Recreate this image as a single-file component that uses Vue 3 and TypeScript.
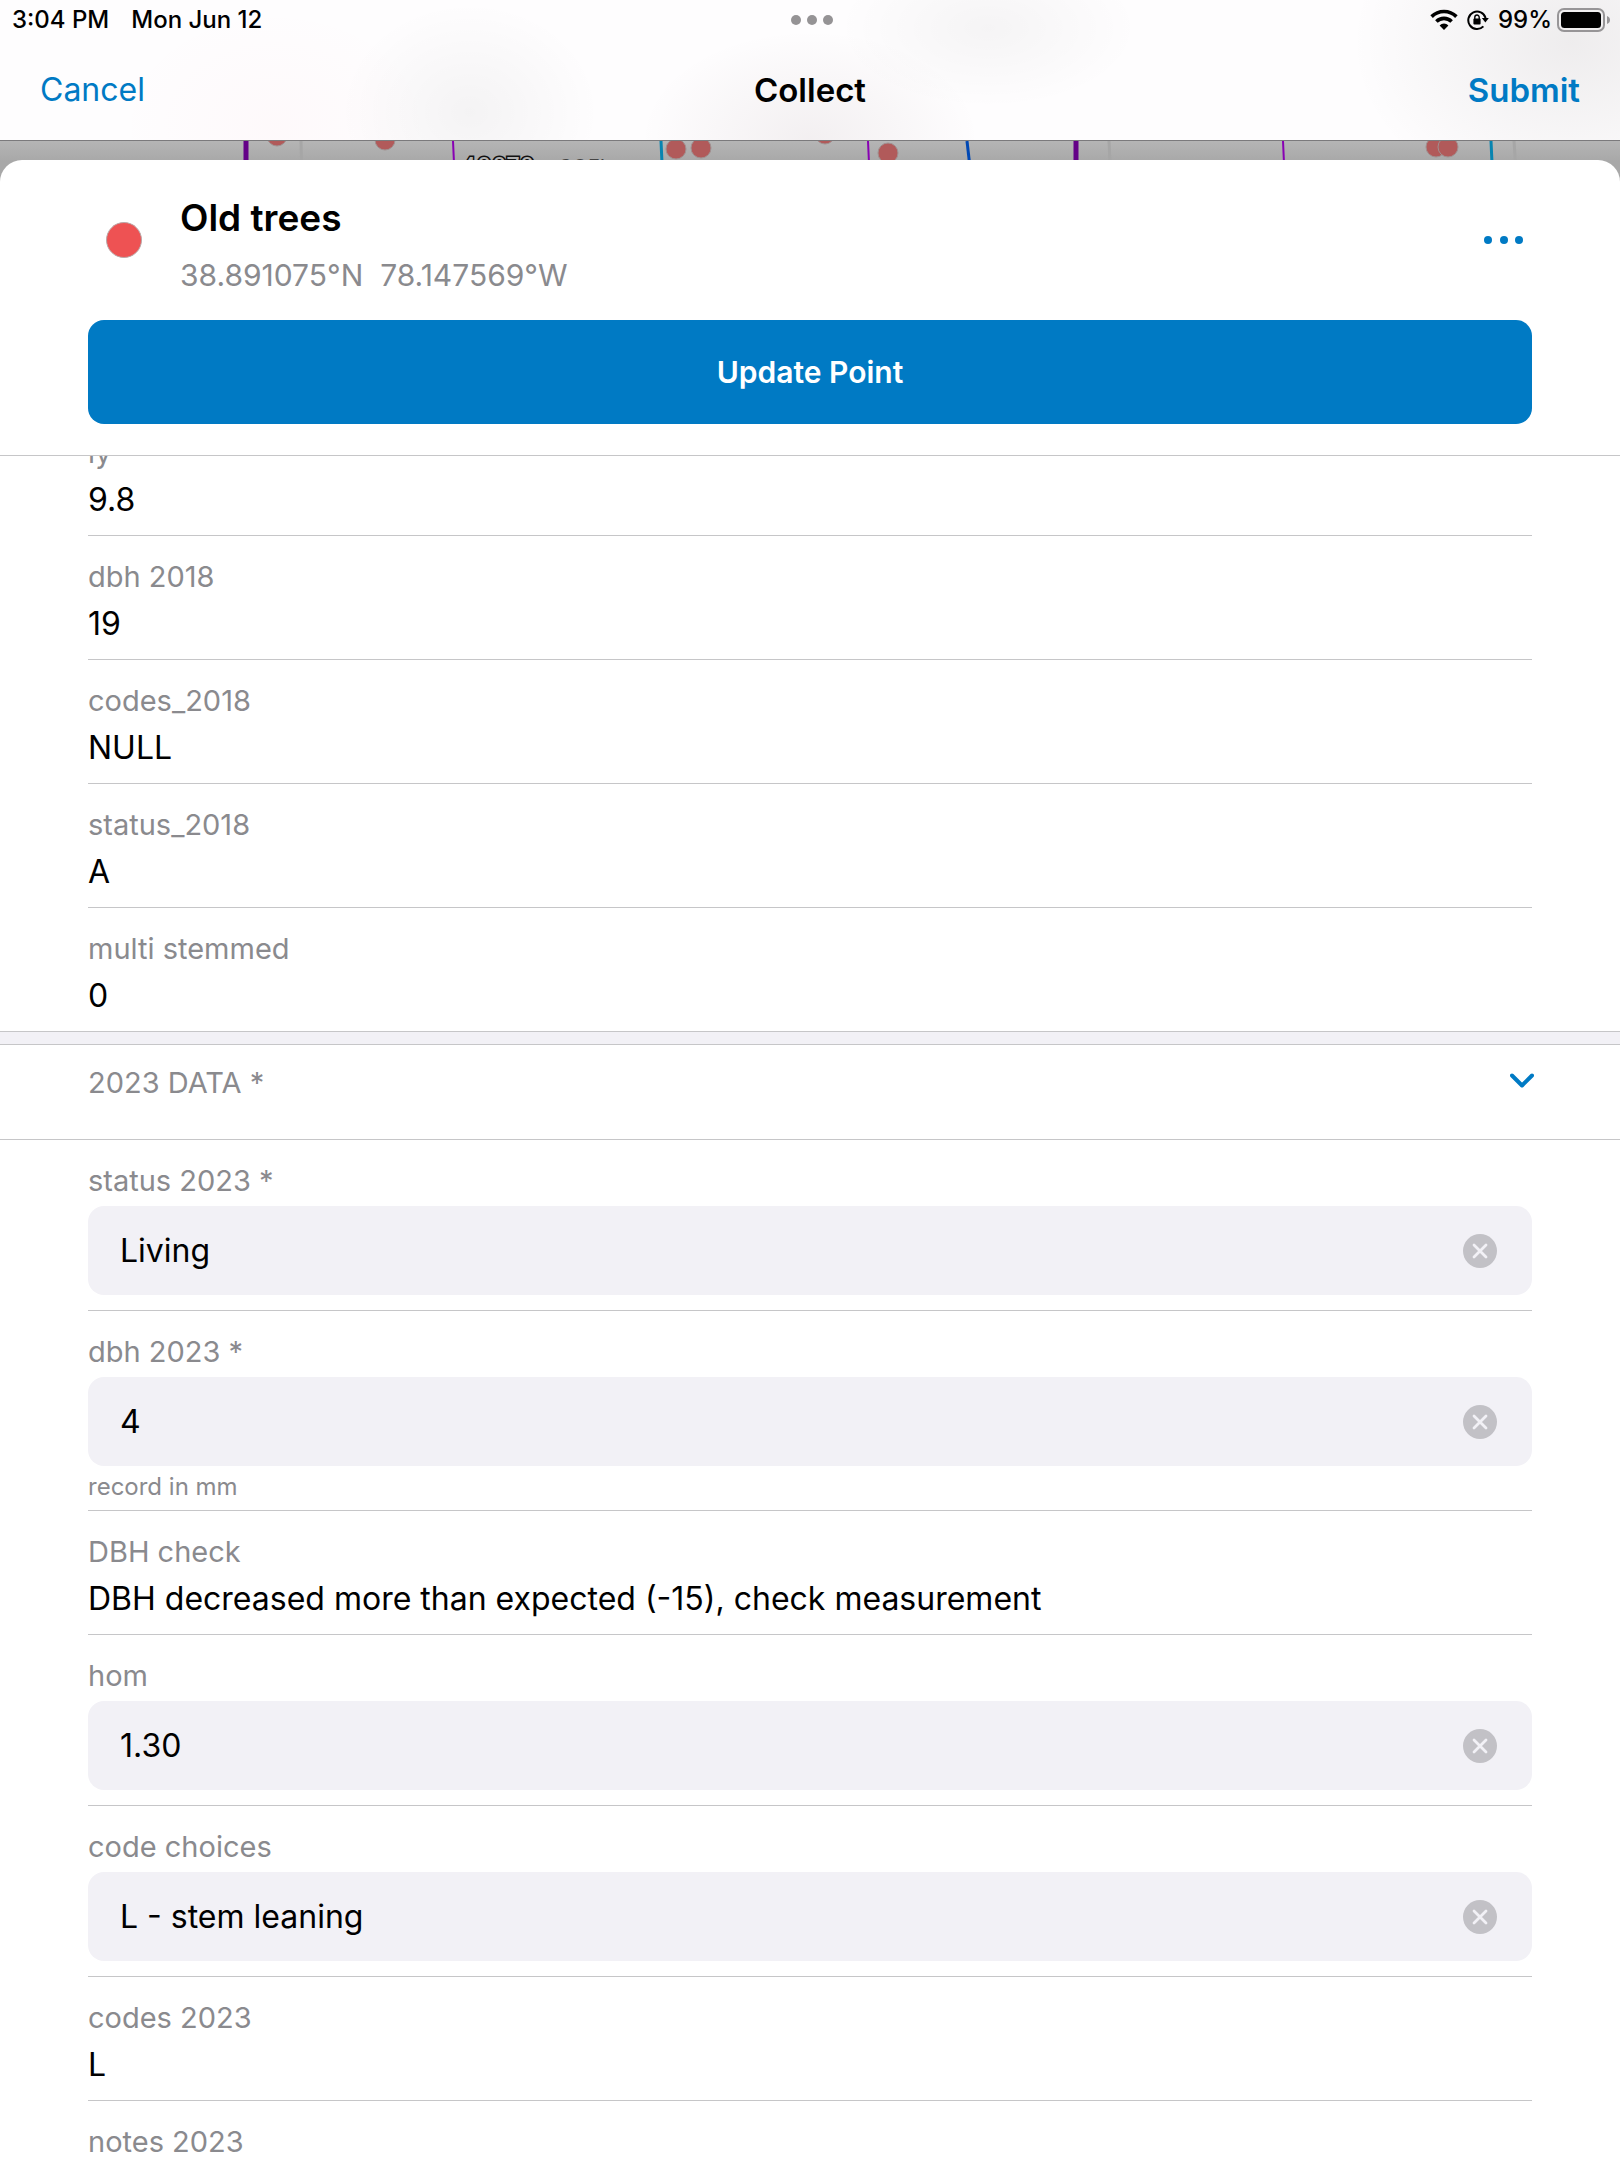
<script setup lang="ts">
import { onMounted, ref } from 'vue'

interface Field {
  id: string
  label: string
  value: string
  editable?: boolean
  hint?: string
}

const previousFields: Field[] = [
  { id: 'ly', label: 'ly', value: '9.8' },
  { id: 'dbh-2018', label: 'dbh 2018', value: '19' },
  { id: 'codes-2018', label: 'codes_2018', value: 'NULL' },
  { id: 'status-2018', label: 'status_2018', value: 'A' },
  { id: 'multi-stemmed', label: 'multi stemmed', value: '0' },
]

const currentFields = ref<Field[]>([
  { id: 'status-2023', label: 'status 2023 *', value: 'Living', editable: true },
  { id: 'dbh-2023', label: 'dbh 2023 *', value: '4', editable: true, hint: 'record in mm' },
  { id: 'dbh-check', label: 'DBH check', value: 'DBH decreased more than expected (-15), check measurement' },
  { id: 'hom', label: 'hom', value: '1.30', editable: true },
  { id: 'code-choices', label: 'code choices', value: 'L - stem leaning', editable: true },
  { id: 'codes-2023', label: 'codes 2023', value: 'L' },
  { id: 'notes-2023', label: 'notes 2023', value: '', editable: true },
])

const expanded = ref(true)
const form = ref<HTMLElement | null>(null)

onMounted(() => {
  if (form.value) form.value.scrollTop = 44
})
</script>

<template>
  <div class="screen">
    <header class="top">
      <div class="status">
        <div class="status-left">
          <span>3:04 PM</span>
          <span>Mon Jun 12</span>
        </div>
        <svg class="multitask" width="44" height="12" viewBox="0 0 44 12" aria-hidden="true">
          <circle cx="6" cy="6" r="5" />
          <circle cx="22" cy="6" r="5" />
          <circle cx="38" cy="6" r="5" />
        </svg>
        <div class="status-right">
          <svg width="28" height="22" viewBox="0 0 28 22" aria-hidden="true">
            <g fill="none" stroke="#000" stroke-width="3.6">
              <path d="M1.6 7.6a17.6 17.6 0 0 1 24.8 0" />
              <path d="M6.4 12.5a10.8 10.8 0 0 1 15.2 0" />
            </g>
            <path d="M14 21l-4.4-4.6a6.3 6.3 0 0 1 8.8 0z" />
          </svg>
          <svg class="lock" width="22" height="22" viewBox="0 0 22 22" aria-hidden="true">
            <path d="M16.4 17.4A8.8 8.8 0 1 1 18.6 9" fill="none" stroke="#000" stroke-width="2" />
            <path d="M14.8 9h7l-3.4 4.6z" />
            <rect x="6.4" y="9.6" width="7.2" height="6" rx="1" />
            <path d="M7.8 10V8.2a2.2 2.2 0 0 1 4.4 0V10" fill="none" stroke="#000" stroke-width="1.4" />
          </svg>
          <span>99%</span>
          <svg width="54" height="24" viewBox="0 0 54 24" aria-hidden="true">
            <rect x="1" y="1" width="46" height="22" rx="6" fill="none" stroke="#979597" stroke-width="2" />
            <rect x="4" y="4" width="40" height="16" rx="3.5" />
            <path d="M50 8c2 .7 3 2.200 3 4s-1 3.300-3 4z" fill="#979597" />
          </svg>
        </div>
      </div>
      <nav class="nav">
        <button type="button" class="nav-button">Cancel</button>
        <h1>Collect</h1>
        <button type="button" class="nav-button strong">Submit</button>
      </nav>
    </header>

    <svg class="map" viewBox="0 0 1620 44" preserveAspectRatio="xMidYMin slice" aria-hidden="true">
      <g stroke="#a6a6a6" stroke-width="3">
        <path d="M301 0l1 44M1109 0l2 44M1514 0l3 44" />
      </g>
      <g fill="#b15a5a" stroke="#a09090" stroke-width="1">
        <circle cx="277" cy="-5" r="10" />
        <circle cx="385" cy="-1" r="10" />
        <circle cx="676" cy="8" r="10" />
        <circle cx="701" cy="7" r="10" />
        <circle cx="825" cy="-7" r="10" />
        <circle cx="888" cy="12" r="10" />
        <circle cx="1436" cy="6" r="10" />
        <circle cx="1448" cy="6" r="10" />
      </g>
      <path d="M246 0v44M1076 0v44" stroke="#640087" stroke-width="5" />
      <path d="M453 0l2 44M868 0l2 44M1283 0l2 44" stroke="#8800b3" stroke-width="2" />
      <path d="M661 0l2 44M1491 0l2 44" stroke="#0784b0" stroke-width="3" />
      <path d="M967 0l5 44" stroke="#0048b4" stroke-width="3" />
      <text class="map-label" x="461" y="34">40070</text>
      <text class="map-faint" x="558" y="33">COFL</text>
    </svg>

    <main class="sheet">
      <section class="feature">
        <div class="feature-row">
          <span class="symbol"></span>
          <div class="feature-text">
            <h2>Old trees</h2>
            <p>38.891075°N&nbsp; 78.147569°W</p>
          </div>
          <button type="button" class="icon-button" aria-label="More">
            <svg width="40" height="8" viewBox="0 0 40 8">
              <circle cx="4" cy="4" r="4" />
              <circle cx="20" cy="4" r="4" />
              <circle cx="35" cy="4" r="4" />
            </svg>
          </button>
        </div>
        <button type="button" class="update">Update Point</button>
      </section>

      <form ref="form" class="form" @submit.prevent>
        <section class="group previous">
          <div v-for="field in previousFields" :key="field.id" class="field">
            <div class="label">{{ field.label }}</div>
            <div class="value">{{ field.value }}</div>
          </div>
        </section>

        <div class="divider"></div>

        <div class="group-head">
          <h3 class="label">2023 DATA *</h3>
          <button type="button" class="icon-button" aria-label="Toggle 2023 data" @click="expanded = !expanded">
            <svg width="24" height="16" viewBox="0 0 24 16">
              <path d="M2 2.500l10 10 10-10" fill="none" stroke="#007ac4" stroke-width="4" stroke-linecap="round" stroke-linejoin="round" />
            </svg>
          </button>
        </div>

        <section v-if="expanded" class="group">
          <div v-for="field in currentFields" :key="field.id" class="field" :class="{ hinted: field.hint }">
            <template v-if="field.editable">
              <label class="label" :for="field.id">{{ field.label }}</label>
              <div class="box">
                <input :id="field.id" v-model="field.value" type="text" autocomplete="off" />
                <button type="button" class="icon-button" aria-label="Clear" @click="field.value = ''">
                  <svg width="34" height="34" viewBox="0 0 34 34">
                    <circle cx="17" cy="17" r="17" fill="#c2c1c6" />
                    <path d="M11 11l12 12M23 11l-12 12" stroke="#f2f1f6" stroke-width="2.800" stroke-linecap="round" />
                  </svg>
                </button>
              </div>
              <p v-if="field.hint" class="hint">{{ field.hint }}</p>
            </template>
            <template v-else>
              <div class="label">{{ field.label }}</div>
              <div class="value">{{ field.value }}</div>
            </template>
          </div>
        </section>
      </form>
    </main>
  </div>
</template>

<style>
body {
  background: #fff;
}
</style>

<style scoped>
.screen {
  display: flex;
  flex-direction: column;
  height: 100vh;
  overflow: hidden;
  color: #000;
  font-family: Inter, "Liberation Sans", sans-serif;
}

h1,
h2,
h3,
p {
  margin: 0;
  font-weight: 400;
}

button {
  padding: 0;
  border: 0;
  background: none;
  color: #007ac4;
  font: inherit;
}

svg {
  display: block;
}

.top {
  flex: none;
  border-bottom: 1px solid #7b7a7c;
  background:
    radial-gradient(ellipse 130px 110px at 29% 80%, rgba(0, 0, 0, 0.04), transparent),
    radial-gradient(ellipse 170px 110px at 50% 100%, rgba(60, 20, 30, 0.06), transparent),
    radial-gradient(ellipse 150px 80px at 61% 20%, rgba(0, 0, 0, 0.035), transparent),
    radial-gradient(ellipse 220px 170px at 97% 30%, rgba(30, 20, 20, 0.07), transparent),
    radial-gradient(ellipse 160px 120px at 17% 90%, rgba(255, 60, 90, 0.02), transparent),
    #fefdfe;
}

.status {
  display: grid;
  grid-template-columns: 1fr auto 1fr;
  align-items: center;
  height: 40px;
  padding: 0 9px 0 12px;
  font-size: 24px;
  line-height: 32px;
  font-weight: 500;
}

.status-left,
.status-right {
  display: flex;
  align-items: center;
}

.status-left {
  gap: 22px;
}

.status-right {
  justify-content: flex-end;
  gap: 5px;
}

.lock {
  margin: 0 4px;
}

.multitask {
  fill: #959395;
}

.nav {
  display: grid;
  grid-template-columns: 1fr auto 1fr;
  align-items: center;
  height: 100px;
  padding: 0 40px;
  font-size: 32px;
  line-height: 44px;
}

.nav-button {
  justify-self: start;
}

.nav-button.strong {
  justify-self: end;
}

.nav h1,
.strong {
  font-size: 33px;
  font-weight: 600;
}

.map {
  flex: none;
  width: 100%;
  height: 44px;
  background: linear-gradient(#b5b5b5, #a8a8a8 20px);
}

.map-label {
  fill: #b0b0b0;
  stroke: #111;
  stroke-width: 3px;
  paint-order: stroke;
  font-size: 24px;
}

.map-faint {
  fill: #444;
  font-size: 20px;
}

.sheet {
  display: flex;
  flex: 1;
  flex-direction: column;
  min-height: 0;
  margin-top: -25px;
  border-radius: 22px 22px 0 0;
  background: #fff;
  z-index: 1;
}

.feature {
  flex: none;
  padding: 32px 88px 31px;
  border-bottom: 1px solid #c6c6c8;
}

.feature-row {
  display: flex;
  align-items: center;
  height: 96px;
  margin-bottom: 32px;
  padding: 0 8px 0 18px;
}

.symbol {
  box-sizing: border-box;
  width: 36px;
  height: 36px;
  border: 1px solid #b9a9a9;
  border-radius: 50%;
  background: #ee5253;
}

.feature-text {
  display: flex;
  flex: 1;
  flex-direction: column;
  gap: 16px;
  margin-left: 38px;
  padding-top: 10px;
}

.feature-text h2 {
  font-size: 37px;
  line-height: 44px;
  font-weight: 600;
}

.feature-text p {
  color: #8a8a8e;
  font-size: 30px;
  line-height: 38px;
}

.icon-button {
  display: flex;
  flex: none;
  fill: #007ac4;
}

.update {
  width: 100%;
  height: 104px;
  border-radius: 16px;
  background: #007ac4;
  color: #fff;
  font-size: 30px;
  font-weight: 600;
}

.form {
  flex: 1;
  min-height: 0;
  overflow: hidden;
}

.group {
  padding: 0 88px;
}

.field {
  box-sizing: border-box;
  padding: 22px 0 13px;
  border-bottom: 1px solid #c6c6c8;
}

.previous .field:last-child {
  border-bottom: 0;
}

.label {
  display: block;
  color: #8a8a8e;
  font-size: 29px;
  line-height: 38px;
}

.value {
  margin-top: 6px;
  font-size: 32px;
  line-height: 44px;
}

.divider {
  height: 12px;
  border: solid #c6c6c8;
  border-width: 1px 0;
  background: #f2f1f6;
}

.group-head {
  display: flex;
  align-items: flex-start;
  justify-content: space-between;
  box-sizing: border-box;
  height: 95px;
  padding: 19px 86px 0 88px;
  border-bottom: 1px solid #c6c6c8;
}

.group-head .icon-button {
  margin-top: 9px;
}

.box {
  display: flex;
  align-items: center;
  box-sizing: border-box;
  height: 89px;
  margin: 6px 0 2px;
  padding: 0 35px 0 32px;
  border-radius: 16px;
  background: #f2f1f6;
}

.box input {
  flex: 1;
  min-width: 0;
  padding: 0;
  border: 0;
  outline: 0;
  background: none;
  color: #000;
  font: inherit;
  font-size: 32px;
  line-height: 44px;
}

.hinted {
  padding-bottom: 7px;
}

.hint {
  margin-top: 5px;
  color: #8a8a8e;
  font-size: 24px;
  line-height: 32px;
}
</style>
